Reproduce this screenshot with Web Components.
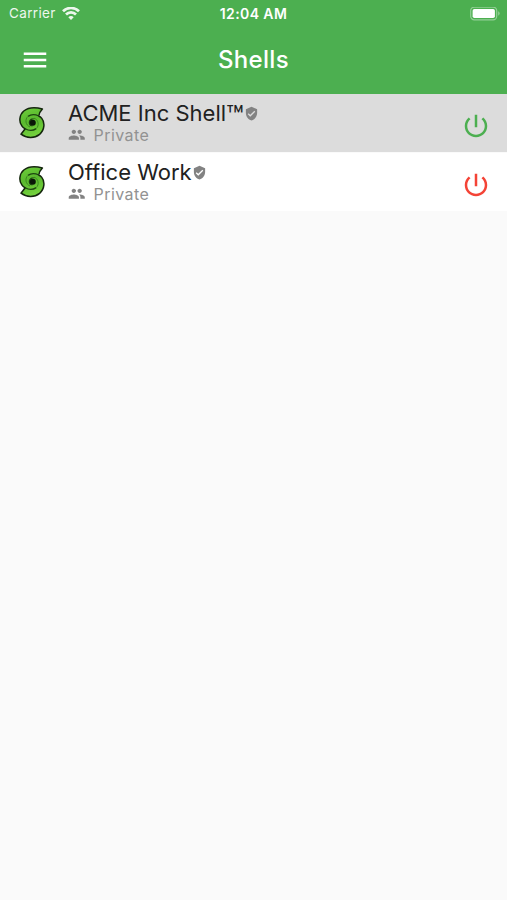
<!DOCTYPE html>
<html lang="en">
<head>
<meta charset="utf-8">
<title>Shells</title>
<style>
  body {
    margin: 0;
    min-height: 100vh;
    background: #fafafa;
    font-family: Inter, Roboto, sans-serif;
  }
</style>
</head>
<body>
<shells-app></shells-app>

<script>
// Status bar: carrier, clock and battery
class StatusBar extends HTMLElement {
  constructor() {
    super();
    this.attachShadow({ mode: 'open' });
  }

  connectedCallback() {
    this.shadowRoot.innerHTML = `
      <style>
        :host {
          display: grid;
          grid-template-columns: 1fr auto 1fr;
          align-items: center;
          height: 27px;
          padding: 0 7px;
          box-sizing: border-box;
          color: #fff;
          font-size: 13.5px;
          line-height: 27px;
        }
        .carrier {
          display: flex;
          align-items: center;
          gap: 6px;
          padding-left: 2px;
          letter-spacing: 0.35px;
          opacity: 0.9;
        }
        .time {
          font-weight: 600;
          font-size: 14px;
          letter-spacing: 0.4px;
        }
        .battery {
          justify-self: end;
        }
        svg {
          display: block;
        }
      </style>
      <div class="carrier">
        <span>${this.getAttribute('carrier')}</span>
        <svg width="18" height="14" viewBox="0 0 18 14" fill="none" stroke="#fff" stroke-width="2.7">
          <path d="M1 4.3a11.3 11.3 0 0 1 16 0"/>
          <path d="M4 7.5a7 7 0 0 1 10 0"/>
          <path d="M6.3 10.3a3.8 3.8 0 0 1 5.4 0L9 13.1z" fill="#fff" stroke="none"/>
        </svg>
      </div>
      <span class="time">${this.getAttribute('time')}</span>
      <svg class="battery" width="30" height="14" viewBox="0 0 30 14">
        <rect x="0.7" y="0.2" width="26" height="12.6" rx="3.6" fill="none" stroke="#fff" stroke-opacity="0.4" stroke-width="1.2"/>
        <rect x="2.6" y="2" width="22.3" height="9" rx="1.8" fill="#fff"/>
        <path d="M28.2 4.3a2.4 2.4 0 0 1 0 4.4z" fill="#fff" fill-opacity="0.4"/>
      </svg>
    `;
  }
}

// Toolbar with the menu button and a centred title
class AppBar extends HTMLElement {
  constructor() {
    super();
    this.attachShadow({ mode: 'open' });
  }

  connectedCallback() {
    this.shadowRoot.innerHTML = `
      <style>
        :host {
          display: grid;
          grid-template-columns: 30px 1fr 30px;
          align-items: center;
          height: 67px;
          padding: 0 20px 1px;
          box-sizing: border-box;
          color: #fff;
        }
        svg {
          display: block;
          fill: currentColor;
        }
        h1 {
          margin: 0;
          font-size: 24px;
          font-weight: 500;
          line-height: 66px;
          letter-spacing: 0.3px;
          text-align: center;
        }
      </style>
      <svg width="30" height="30" viewBox="0 0 24 24">
        <path d="M3 18h18v-2H3v2zm0-5h18v-2H3v2zm0-7v2h18V6H3z"/>
      </svg>
      <h1><slot></slot></h1>
    `;
  }
}

// Green spiral logo
class ShellLogo extends HTMLElement {
  constructor() {
    super();
    this.attachShadow({ mode: 'open' });
  }

  connectedCallback() {
    this.shadowRoot.innerHTML = `
      <style>
        :host {
          display: block;
        }
        svg {
          display: block;
        }
      </style>
      <svg width="26" height="32" viewBox="0 0 26 32">
        <defs>
          <linearGradient id="body" x1="0" y1="0" x2="0.3" y2="1">
            <stop offset="0" stop-color="#6fd03c"/>
            <stop offset="0.5" stop-color="#5ab82e"/>
            <stop offset="1" stop-color="#72d03c"/>
          </linearGradient>
        </defs>
        <path d="M23.4 2C17 .3 9.5 .3 4.8 4C.2 7.8 -.2 15 2.8 18.8C3.6 20 4.8 21 6.2 21.8L2 27.2C7.5 31.4 15.6 31.5 20.6 27.4C25.8 22.8 26 15.4 22.8 11.4C21.9 10.3 21 9.7 19.8 9C20 6.4 21.4 4 23.4 2z"
          fill="url(#body)" stroke="#14260d" stroke-width="1.5" stroke-linejoin="round"/>
        <path d="M19.8 9C15.8 7.2 11.8 7.4 9 9.4" fill="none" stroke="#1c4410" stroke-width="1.3"/>
        <path d="M9 9.4C5.6 12.2 6.6 18.4 11 20" fill="none" stroke="#3c8a20" stroke-width="1"/>
        <path d="M6.2 21.8C10 24 14.4 23.6 17.2 21.6" fill="none" stroke="#1c4410" stroke-width="1.3"/>
        <path d="M17.2 21.6C20.6 18.8 19.4 12.2 15 11.2" fill="none" stroke="#3c8a20" stroke-width="1"/>
        <path d="M15.6 12C12.4 10.6 9.4 13 9.8 16.4C10.2 18.6 12 19.6 14 19.2C12.2 18.4 11.2 17 11.2 15.2C11.3 13.4 13 12 15.6 12z" fill="#1c4410"/>
        <circle cx="13.8" cy="15.7" r="3" fill="#0a1708"/>
      </svg>
    `;
  }
}

// One list row: logo, name with badge, visibility and power state
class ShellItem extends HTMLElement {
  constructor() {
    super();
    this.attachShadow({ mode: 'open' });
  }

  connectedCallback() {
    this.shadowRoot.innerHTML = `
      <style>
        :host {
          display: flex;
          height: 59px;
          padding: 0 16px 0 19px;
          box-sizing: border-box;
          border-bottom: 1px solid #fafafa;
          background: #fff;
          color: #212121;
        }
        :host([selected]) {
          background: #dcdcdc;
        }
        shell-logo {
          margin: 13px 23px 0 0;
        }
        .text {
          flex: 1;
          padding-top: 6px;
        }
        .name {
          display: flex;
          align-items: center;
          height: 27px;
          font-size: 22px;
          line-height: 27px;
          white-space: nowrap;
        }
        ::slotted(.mark) {
          font-size: 29px;
          line-height: 0;
          vertical-align: -5px;
        }
        .detail {
          display: flex;
          align-items: center;
          gap: 8px;
          height: 18px;
          margin-top: -1px;
          color: #929292;
          font-size: 16px;
          line-height: 18px;
          letter-spacing: 0.45px;
        }
        svg {
          display: block;
          flex: none;
        }
        .grey {
          fill: #828282;
        }
        .power {
          margin-top: 17px;
          fill: #f44336;
        }
        :host([online]) .power {
          fill: #4caf50;
        }
      </style>
      <shell-logo></shell-logo>
      <div class="text">
        <div class="name">
          <span><slot></slot></span>
          <svg class="grey" width="15" height="15" viewBox="0 0 24 24">
            <path d="M12 1L3 5v6c0 5.55 3.84 10.74 9 12 5.16-1.26 9-6.45 9-12V5l-9-4zm-2 16l-4-4 1.41-1.41L10 14.17l6.59-6.59L18 9l-8 8z"/>
          </svg>
        </div>
        <div class="detail">
          <svg class="grey" width="17.5" height="17.5" viewBox="0 0 24 24">
            <path d="M16 11c1.66 0 2.99-1.34 2.99-3S17.66 5 16 5c-1.66 0-3 1.34-3 3s1.34 3 3 3zm-8 0c1.66 0 2.99-1.34 2.99-3S9.66 5 8 5C6.34 5 5 6.34 5 8s1.34 3 3 3zm0 2c-2.33 0-7 1.17-7 3.5V19h14v-2.5c0-2.33-4.67-3.5-7-3.5zm8 0c-.29 0-.62.02-.97.05 1.16.84 1.97 1.97 1.97 3.45V19h6v-2.5c0-2.33-4.67-3.5-7-3.5z"/>
          </svg>
          <span>${this.getAttribute('detail')}</span>
        </div>
      </div>
      <svg class="power" width="30" height="30" viewBox="0 0 24 24">
        <path d="M13 3h-2v10h2V3zm4.83 2.17l-1.42 1.42C17.99 7.86 19 9.81 19 12c0 3.87-3.13 7-7 7s-7-3.13-7-7c0-2.19 1.01-4.14 2.58-5.42L6.17 5.17C4.23 6.82 3 9.26 3 12c0 4.97 4.03 9 9 9s9-4.03 9-9c0-2.74-1.23-5.18-3.17-6.83z"/>
      </svg>
    `;
  }
}

class ShellsApp extends HTMLElement {
  constructor() {
    super();
    this.attachShadow({ mode: 'open' });
  }

  connectedCallback() {
    this.shadowRoot.innerHTML = `
      <style>
        :host {
          display: block;
        }
        header {
          background: #4caf50;
        }
      </style>
      <header>
        <status-bar carrier="Carrier" time="12:04 AM"></status-bar>
        <app-bar>Shells</app-bar>
      </header>
      <main>
        <shell-item selected online detail="Private">ACME Inc Shell<span class="mark">™</span></shell-item>
        <shell-item detail="Private">Office Work</shell-item>
      </main>
    `;
  }
}

customElements.define('status-bar', StatusBar);
customElements.define('app-bar', AppBar);
customElements.define('shell-logo', ShellLogo);
customElements.define('shell-item', ShellItem);
customElements.define('shells-app', ShellsApp);
</script>
</body>
</html>
